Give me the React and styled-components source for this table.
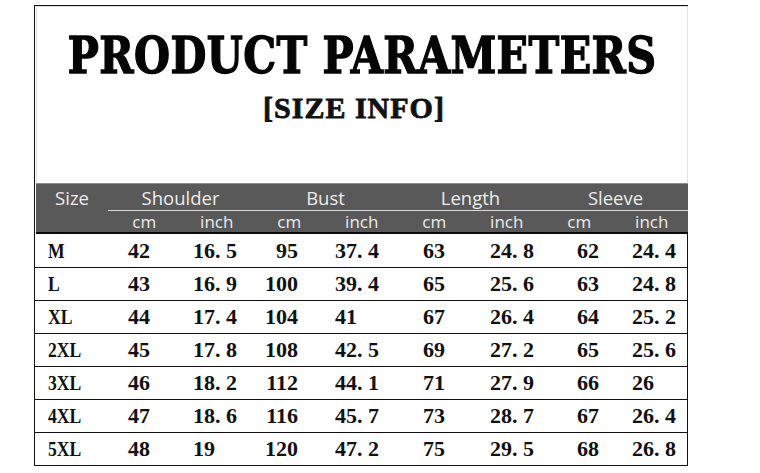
import React from 'react'
import styled, { createGlobalStyle } from 'styled-components'

const GlobalStyle = createGlobalStyle`
  body {
    margin: 0;
    background: #fff;
  }
`

const groups = ['Shoulder', 'Bust', 'Length', 'Sleeve']

const rows = [
    ['M', '42', '16.5', '95', '37.4', '63', '24.8', '62', '24.4'],
    ['L', '43', '16.9', '100', '39.4', '65', '25.6', '63', '24.8'],
    ['XL', '44', '17.4', '104', '41', '67', '26.4', '64', '25.2'],
    ['2XL', '45', '17.8', '108', '42.5', '69', '27.2', '65', '25.6'],
    ['3XL', '46', '18.2', '112', '44.1', '71', '27.9', '66', '26'],
    ['4XL', '47', '18.6', '116', '45.7', '73', '28.7', '67', '26.4'],
    ['5XL', '48', '19', '120', '47.2', '75', '29.5', '68', '26.8'],
]

function Num({ value }) {
    const [whole, frac] = value.split('.')
    if (frac === undefined) return <>{value}</>
    return <>{whole}<Dot>.</Dot>{frac}</>
}

function App() {
    return (
        <>
            <GlobalStyle />
            <Frame>
                <Banner>
                    <Title>PRODUCT PARAMETERS</Title>
                    <Subtitle>[SIZE INFO]</Subtitle>
                </Banner>
                <Band>
                    <BandCell>Size</BandCell>
                    {groups.map((g) => (
                        <GroupCell key={g}>{g}</GroupCell>
                    ))}
                    <Divider />
                    {groups.map((g, i) => (
                        <React.Fragment key={g}>
                            <UnitCell $col={i * 2 + 2}>cm</UnitCell>
                            <UnitCell $col={i * 2 + 3}>inch</UnitCell>
                        </React.Fragment>
                    ))}
                </Band>
                <Body>
                    {rows.map((r) => (
                        <Row key={r[0]}>
                            <SizeCell><SizeLabel>{r[0]}</SizeLabel></SizeCell>
                            {r.slice(1).map((v, i) => (
                                <Cell key={i} $right={i === 2}>
                                    <Num value={v} />
                                </Cell>
                            ))}
                        </Row>
                    ))}
                </Body>
            </Frame>
        </>
    )
}

const Frame = styled.div`
    margin: 5px 0 0 34px;
    width: 653px;
    border-top: 1px solid #111;
    border-left: 1px solid #111;
`

const Banner = styled.div`
    height: 177px;
    box-sizing: border-box;
    border: 1px solid #e2e2e2;
    border-bottom: none;
    margin-left: 1px;
    padding-top: 19px;
    display: flex;
    flex-direction: column;
    align-items: center;
`

const Title = styled.h1`
    margin: 0;
    font-family: "DejaVu Serif", "Liberation Serif", serif;
    font-stretch: condensed;
    font-weight: 900;
    font-size: 51px;
    line-height: 58px;
    letter-spacing: 0.5px;
    color: #050505;
    white-space: nowrap;
    transform: scaleX(0.9);
    -webkit-text-stroke: 1.3px #050505;
`

const Subtitle = styled.h2`
    margin: 7px 0 0 -16px;
    font-family: "Liberation Serif", serif;
    font-weight: 700;
    font-size: 30px;
    line-height: 34px;
    letter-spacing: 1px;
    color: #111;
    white-space: nowrap;
    -webkit-text-stroke: 0.8px #111;
`

const Band = styled.div`
    display: grid;
    grid-template-columns: 72px repeat(8, 72.5px);
    grid-template-rows: 26px 1px 21px;
    background: #595959;
    border-top: 1px solid #8d8d8d;
    border-bottom: 2px solid #0a0a0a;
    margin-left: 1px;
    font-family: "Open Sans", "Noto Sans", sans-serif;
    color: #ececec;
`

const BandCell = styled.div`
    grid-row: 1;
    display: flex;
    align-items: center;
    justify-content: center;
    font-size: 18.5px;
`

const GroupCell = styled(BandCell)`
    grid-column: span 2;
`

const Divider = styled.div`
    grid-column: 2 / -1;
    grid-row: 2;
    background: #d8d8d8;
`

const UnitCell = styled.div`
    grid-row: 3;
    grid-column: ${(p) => p.$col};
    display: flex;
    align-items: center;
    justify-content: center;
    font-size: 17px;
`

const Body = styled.div`
    border-right: 1px solid #111;
    font-family: "Liberation Serif", serif;
    font-weight: 700;
    font-size: 22px;
    color: #111;
`

const Row = styled.div`
    display: grid;
    grid-template-columns: 93px 65px 72px 70px 88px 67px 87px 55px 55px;
    height: 33px;
    box-sizing: border-box;
    border-bottom: 1px solid #111;
    align-items: center;
    &:first-child {
        height: 34px;
    }
`

const Cell = styled.div`
    white-space: nowrap;
    text-align: ${(p) => (p.$right ? 'right' : 'left')};
    padding-right: ${(p) => (p.$right ? '37px' : '0')};
`

const SizeCell = styled.div`
    padding-left: 13px;
`

const SizeLabel = styled.span`
    display: inline-block;
    transform: scaleX(0.8);
    transform-origin: left center;
`

const Dot = styled.span`
    display: inline-block;
    width: 0.5em;
`

export default App
